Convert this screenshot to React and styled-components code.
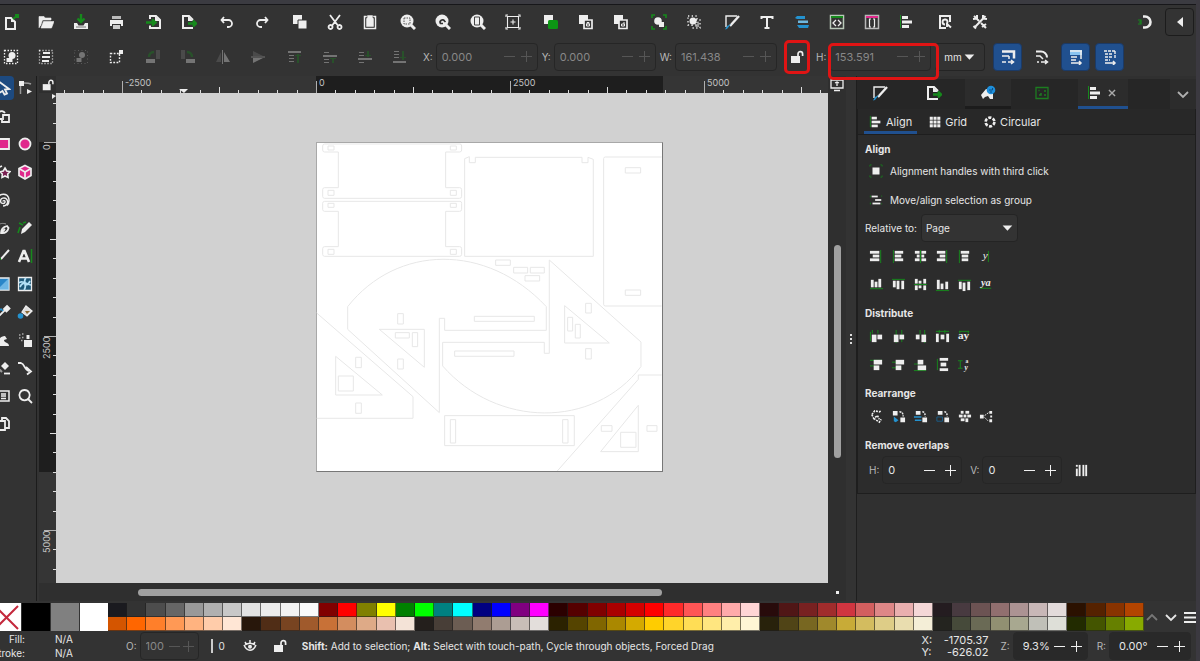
import { useState } from "react";
import styled, { createGlobalStyle } from "styled-components";

const W = "#eeeeee";
const G = "#168a1c";
const B = "#2492cf";
const P = "#e0288c";

// every entry lives in a 16x16 box; a list means plain rects: [x, y, w, h, color]
const glyphs = {
    newDoc: <><path d="M3 4h5l4 4v7H3z" fill="none" stroke={W} strokeWidth="2" /><path d="M8 4v4h4" fill={W} /><path d="M10 5l5-4M12 1h3v3" stroke={G} strokeWidth="2" fill="none" /></>,
    open: <path d="M1 14V2.500h5l1 1.500h6v2H4.500L2.500 12M3 14L5.500 7.500H16L13.500 14z" fill={W} stroke={W} strokeLinejoin="round" strokeWidth=".6" />,
    save: <><path d="M1 9h14v6H1z" fill={W} /><path d="M4 9h8l-1.500 2.500h-5z" fill="#333" /><path d="M3 13h10" stroke="#777" /><path d="M8 0v7M4.500 4.500L8 8l3.500-3.500" stroke={G} strokeWidth="2.400" fill="none" /></>,
    print: <><path d="M4 2h9v3H4z" fill="#bbb" /><path d="M2 6h13v6h-2v-2H4v2H2z" fill={W} /><path d="M5 11h7v4H5z" fill="#ccc" /></>,
    importDoc: <><path d="M4 5V2h6l4 4v8H4v-2.500" fill="none" stroke={W} strokeWidth="2" /><path d="M9 2v5h5" fill={W} /><path d="M0 8.500h8M6 5.500l3.500 3L6 11.500" stroke={G} strokeWidth="2.400" fill="none" /></>,
    exportDoc: <><path d="M11 13v1H2V2h6l4 4" fill="none" stroke={W} strokeWidth="2" /><path d="M7 2v5h5z" fill={W} /><path d="M7 9.500h8M12 6.500l3 3-3 3" stroke={G} strokeWidth="2.400" fill="none" /></>,
    undo: <path d="M5 3L2.500 6 5 9M3 6h6.500a3.500 3.500 0 0 1 0 7H8" fill="none" stroke={W} strokeWidth="1.800" />,
    redo: <path d="M11 3l2.500 3L11 9M13 6H6.500a3.500 3.500 0 0 0 0 7H8" fill="none" stroke={W} strokeWidth="1.800" />,
    copy: <><path d="M1 1h9v9H1z" fill={W} /><path d="M6 6h9v9H6z" fill={W} stroke="#333" /></>,
    cut: <path d="M3 1l7.500 10M13 1L5.500 11M3.500 11a2 2 0 1 0 .1 0zM12.500 11a2 2 0 1 0 .1 0z" fill="none" stroke={W} strokeWidth="1.800" />,
    paste: <><path d="M2.500 2.500h11v12h-11z" fill="none" stroke={W} strokeWidth="1.500" /><path d="M5 1h6v3h1v9H4V4h1z" fill={W} stroke="#333" strokeWidth=".5" /></>,
    zoomSel: <><circle cx="7" cy="7" r="6.500" fill={W} /><path d="M11 11l4 4" stroke={W} strokeWidth="3" /><path d="M4 4h6v6H4z" fill="none" stroke="#555" strokeDasharray="1.500 1" /></>,
    zoomDraw: <><circle cx="7" cy="7" r="6.500" fill={W} /><path d="M11 11l4 4" stroke={W} strokeWidth="3" /><path d="M8 9.500H5.500a2.300 2.300 0 1 1 4-2.500l1 1" fill="none" stroke="#333" strokeWidth="1.700" /></>,
    zoomPage: <><circle cx="7" cy="7" r="6.500" fill={W} /><path d="M11 11l4 4" stroke={W} strokeWidth="3" /><path d="M4.500 3h5v8h-5z" fill={W} stroke="#444" /></>,
    center: <path d="M2.500 2.500h11v11h-11zM8 5.500v5M5.500 8h5M1 3V1h2M13 1h2v2M15 13v2h-2M3 15H1v-2" fill="none" stroke={W} strokeWidth="1.100" />,
    duplicate: <><path d="M1 1h9v9H1z" fill={W} /><rect x="5" y="6" width="10" height="9" rx="1.500" fill="#0c9614" /></>,
    clone: <><path d="M1 1h9v9H1z" fill={W} /><path d="M6 6h8v8.500H6z" fill="#333" stroke={W} strokeWidth="1.700" /><path d="M8.500 10h3v2h-3zM9 10V8.500h2V10" fill="none" stroke={W} /></>,
    unlink: <><path d="M1 1h9v9H1z" fill={W} /><path d="M6 6h8v8.500H6z" fill="#333" stroke={W} strokeWidth="1.700" /><path d="M8.500 10h3v2h-3zM11 10V8" fill="none" stroke={W} /></>,
    group: <><circle cx="7" cy="7" r="3.800" fill={W} /><path d="M8 8h5v5H8z" fill={W} /><path d="M1 4V1h3M12 1h3v3M15 12v3h-3M4 15H1v-3" fill="none" stroke={G} strokeWidth="1.600" /></>,
    ungroup: <><circle cx="7" cy="7" r="3.500" fill={W} /><path d="M9 13l4-6v6z" fill="#999" /><path d="M2 2h9v9H2zM6 6h8v8H6z" fill="none" stroke={W} strokeWidth="1.300" strokeDasharray="1.300 2.400" /></>,
    fill: <><path d="M13 2H2v11" fill="none" stroke={W} strokeWidth="1.400" /><path d="M15 2L6 12" stroke={W} strokeWidth="2.400" /><path d="M7 10l-4 5-2 .5L3 12z" fill={B} /></>,
    text: <path d="M2.500 5V3h11v2M8 3v11M5.500 14h5" fill="none" stroke={W} strokeWidth="2" />,
    layers: <><path d="M1 4l2-2h8v3H3z" fill={B} /><path d="M4 6.500h10v2.500H4z" fill="#6fb8df" /><path d="M3 11h12l-1 3H5z" fill={B} /></>,
    xml: <><path d="M1.500 1.500h13v13h-13z" fill="none" stroke="#b8c8b8" strokeWidth="1.500" /><path d="M2 3h12" stroke={G} strokeWidth="2" /><path d="M7 6L4 9l3 3M9 6l3 3-3 3" fill="none" stroke={W} strokeWidth="1.300" /></>,
    selectors: <><path d="M1.500 1.500h13v13h-13z" fill="none" stroke="#b8b8b8" strokeWidth="1.500" /><path d="M2 3h12" stroke={P} strokeWidth="2" /><path d="M7 5H5.500v8H7M9 5h1.500v8H9" fill="none" stroke={W} strokeWidth="1.200" /></>,
    align: [[1, 1, 1, 13, G], [3, 2, 6, 3], [3, 6.5, 10, 3], [3, 11, 7, 3]],
    docProps: <><path d="M9 14H3V2h10v6" fill="none" stroke={W} strokeWidth="2" /><path d="M8 10.500a2.500 2.500 0 1 1 2.500-3L10 10l4 3.500M10 9v4" fill="none" stroke={W} strokeWidth="1.900" /></>,
    prefs: <path d="M2 2l5 5M1 5l4-.5L5 1M9 9l5 5M10 13l4-3M13.500 2L3 13M15 5l-4-.5L11 1M1.500 12L4 14.500" fill="none" stroke={W} strokeWidth="2" />,
    snap: <><path d="M6 2.500h2a5.500 5.500 0 0 1 0 11H6" fill="none" stroke={W} strokeWidth="2.600" /><path d="M1 6h3v4H1M2 8h2" fill="none" stroke={G} strokeWidth="1.200" /></>,
    back: <path d="M11 3v10L5 8z" fill={W} />,

    selAll: <><path d="M1.500 1.500h13v13h-13z" fill="none" stroke={W} strokeWidth="1.300" strokeDasharray="1.500 1.500" /><circle cx="9" cy="6.500" r="3.500" fill={W} /><path d="M3.500 9h6v4h-6z" fill={W} /></>,
    selLayers: <><path d="M1.500 1.500h13v13h-13z" fill="none" stroke={W} strokeWidth="1.300" strokeDasharray="1 2" /><path d="M5 4h7M4 8h8M4 12h7" stroke={W} strokeWidth="2" /></>,
    deselect: <><path d="M1.500 1.500h13v13h-13z" fill="none" stroke={W} strokeDasharray="1 2.500" opacity=".6" /><circle cx="9" cy="6" r="3" fill={W} /><path d="M3.500 9h5v4h-5z" fill={W} /></>,
    touch: <><path d="M2.500 4.500h9v9h-9z" fill="none" stroke={W} strokeWidth="1.400" strokeDasharray="1.800 1.400" /><path d="M11 1h4v4h-4z" fill={W} /></>,
    rotL: <><path d="M1 10h9v4H1z" fill={W} /><path d="M11 1h4v9h-4z" fill="#777" /><path d="M4 8c0-3 2-5 5-5" stroke={G} strokeWidth="2.500" fill="none" /></>,
    rotR: <><path d="M6 10h9v4H6z" fill={W} /><path d="M1 1h4v9H1z" fill="#777" /><path d="M7 3c3 0 5 2 5 5" stroke={G} strokeWidth="2.500" fill="none" /></>,
    flipH: <><path d="M6 3v10H1z" fill="#777" /><path d="M9 3l6 10H9z" fill={W} /><path d="M7.500 1v14" stroke={W} /></>,
    flipV: <><path d="M3 2l10 5H3z" fill="#777" /><path d="M3 9h10L3 14z" fill={W} /><path d="M1 8h14" stroke={W} /></>,
    raiseTop: [[1, 2, 13, 2], [2, 6, 5, 1], [2, 9, 5, 1], [2, 12, 5, 1], [10, 5, 2, 9, G], [8, 6, 6, 1, G]],
    raise: [[2, 3, 5, 1], [1, 6, 14, 2], [2, 10, 5, 1], [2, 13, 5, 1], [10, 9, 2, 5, G], [8, 9, 6, 1, G]],
    lower: [[2, 3, 5, 1], [2, 6, 5, 1], [1, 9, 14, 2], [2, 13, 5, 1], [10, 2, 2, 6, G], [8, 6, 6, 1, G]],
    lowerBottom: [[2, 2, 5, 1], [2, 5, 5, 1], [2, 8, 5, 1], [1, 12, 13, 2], [10, 2, 2, 9, G], [8, 8, 6, 1, G]],
    unlock: <><path d="M2 7h9v7H2z" fill={W} /><path d="M9 7V5a2.300 2.300 0 0 1 4.600 0v2" fill="none" stroke={W} strokeWidth="1.700" /></>,
    scaleStroke: <><path d="M2 2.500h12v7" fill="none" stroke={W} strokeWidth="2.500" /><path d="M2 7h7M9 7v3M2 13h4M8 13h5M11 11l2.500 2-2.500 2" fill="none" stroke={W} strokeWidth="1.500" /></>,
    scaleCorner: <><path d="M2 2.500h5a6 6 0 0 1 6 6" fill="none" stroke={W} strokeWidth="2" /><path d="M2 7h4l3 3M3 13h2M7 13h6M11 11l2.500 2-2.500 2" fill="none" stroke={W} strokeWidth="1.500" /></>,
    scaleGrad: <><path d="M2 1h12v5H2z" fill="#8ac4f0" /><path d="M2 2h12M13 2v8M3 8h6M3 11h5M3 14h10M11 12l2 2-2 2" fill="none" stroke={W} strokeWidth="1.500" /></>,
    scalePattern: <><path d="M2 2h12M13 2v8M3 5h7M3 8h7M3 11h5" fill="none" stroke={W} strokeWidth="1.400" strokeDasharray="3 1" /><path d="M3 14h10M11 12l2 2-2 2" fill="none" stroke={W} strokeWidth="1.500" /></>,

    pointer: <path d="M3 1l11 8-4 .5 2 4-2.500 1L7.500 11 4 13z" fill="none" stroke={W} strokeWidth="1.800" />,
    node: <><path d="M2 1h5v5H2z" fill={W} /><path d="M3.500 6v8M7 3c3 0 5 0 7 1" stroke="#999" fill="none" strokeWidth="1.500" /><path d="M10 9l5 2.500-5 2.500z" fill={W} /></>,
    builder: <path d="M8 12V7h6v7H7v-2M3 10a4 4 0 1 1 7-5M2 11h5" fill="none" stroke={W} strokeWidth="1.800" />,
    rect: <path d="M2 3h12v10H2z" fill={P} stroke={W} strokeWidth="1.800" />,
    ellipse: <circle cx="8" cy="8" r="5.500" fill={P} stroke={W} strokeWidth="1.800" />,
    star: <path d="M10 4l1.700 3 3.300.7-2.300 2.300.4 3.500-3.100-1.500L7 13.500 7.300 10 5 7.700 8.300 7zM2 4l5-2" fill="#7a2052" stroke={W} strokeWidth="1.600" />,
    box: <><path d="M8 1.500l6 3v7l-6 3.500-6-3.500v-7z" fill={P} stroke={W} strokeWidth="1.700" /><path d="M2 4.500l6 3.500 6-3.500M8 8v7" fill="none" stroke={W} strokeWidth="1.700" /></>,
    spiral: <path d="M8 9.500c0-1.500 2.500-1 2 .7-.6 2-4.500 1.600-4.500-1.200 0-3 4-4 6-2 2.500 3 .5 7-3.500 7M3 5c3-4 9-3.500 10.500.5 1 3 .5 6-1.500 8" fill="none" stroke={W} strokeWidth="1.400" />,
    pen: <><path d="M6 13c0-4 2-6 6-7l1.500 2c-1 4-3 5.500-7.500 5zM6 13l4-4" fill="none" stroke={W} strokeWidth="1.800" /><path d="M2 6c3-3 6-3 9-2" stroke="#999" fill="none" /></>,
    pencil: <><path d="M12 2l3 3-7 7-4 2 1-5z" fill={W} /><path d="M1 13l2-6M2 3l4 2M6 3l3-1" stroke={G} strokeWidth="1.600" fill="none" /></>,
    brush: <><path d="M14 2l-8 9" stroke={W} strokeWidth="2" /><path d="M3 8l3 3-4 3" fill={G} stroke={G} /></>,
    textTool: <><path d="M2 14L6.500 3h1L12 14M4 10.500h6" fill="none" stroke={W} strokeWidth="2.600" /><path d="M14.500 1v14" stroke={G} strokeWidth="1.500" /></>,
    gradient: <><path d="M2 2h12v12H2z" fill="#2a86c8" stroke={W} strokeWidth="1.300" /><path d="M2 14L14 2v12z" fill="#8ccbf0" opacity=".7" /></>,
    mesh: <><path d="M1.500 1.500h13v13h-13z" fill="#1e5878" stroke={W} strokeWidth="1.300" /><path d="M9 2c-4 3 2 8-2 12M2 7c3-4 8 2 12 2M8 8c-2-2-4 1-5 3M8 8c2 2 4-1 5-3" fill="none" stroke="#b4e0f6" strokeWidth="1.700" /></>,
    dropper: <><path d="M12 2l2.500 2.500-3 3L9 5zM9.500 6.500L4 12l-1 2" stroke={W} strokeWidth="1.800" fill={W} /><path d="M2 9l4-4 2 2" stroke={B} strokeWidth="1.500" fill="none" /></>,
    bucket: <><path d="M9 2l6 5-5 5-5-4z" fill="#ddd" stroke={W} strokeWidth="1.300" /><path d="M8 7h5l-3 3z" fill="#8a6a35" /><circle cx="3.500" cy="12" r="2.800" fill={B} /></>,
    tweak: <path d="M1 14c3 0 1-10 9-10l2 3-3 1c0 3 5 2 5 6z" fill={W} />,
    spray: <><path d="M7 8h8v7H7zM9.500 3h3v4h-3z" fill={W} /><path d="M2 3h1.500M5 2h1.500M2 6h1.500M5 5.500h1.500M4 8.500h1.500" stroke="#aaa" strokeWidth="1.500" /></>,
    eraser: <><path d="M10 2l4 4-4 4-4-4z" fill={W} /><path d="M9 13.500h6" stroke={W} strokeWidth="1.800" /><path d="M3 8l4 4" stroke="#999" strokeWidth="2" /></>,
    connector: <path d="M1 3h3c4 1 3 7 8 8M9 7l5 4.500-4 3" fill="none" stroke={W} strokeWidth="1.800" />,
    lpe: <path d="M3 3h11v10H3M6 6h5M6 8h5M6 10.500h5" fill="none" stroke={W} strokeWidth="1.500" />,
    zoom: <path d="M7.500 2a5.200 5.200 0 1 0 .1 0zM11.500 11.500L15 15" fill="none" stroke={W} strokeWidth="1.800" />,
    pages: <path d="M5 5h5v9H3M7 5V2h4l3 3v7h-4" fill="none" stroke={W} strokeWidth="1.800" />,

    monitor: <path d="M2 3h12v8H2zM5 13.500h6M6 6l2-1 2 1M8 5v4" fill="none" stroke={W} strokeWidth="1.300" />,
    objects: <><path d="M1 10l5-6 4 1 3 4v5h-3l-2-3-3 1-2 2z" fill={W} /><circle cx="11" cy="5" r="4.300" fill="#1d8fdc" /><path d="M9 5h3.500V3M10 7h2" stroke="#0d4f86" fill="none" /></>,
    trace: <><path d="M2 2.500h12v11H2z" fill="none" stroke="#1c7c20" strokeWidth="1.300" /><path d="M5 10h2V8M10 6h2M4.500 5.500h1M10 10h2" stroke="#1c7c20" strokeWidth="1.500" fill="none" /></>,
    close: <path d="M4.500 4.500l7 7M11.500 4.500l-7 7" stroke="#aaa" strokeWidth="1.600" />,
    chevDown: <path d="M3 6l5 5 5-5" fill="none" stroke="currentColor" strokeWidth="1.800" />,
    chevUp: <path d="M3 11l5-5 5 5" fill="none" stroke="currentColor" strokeWidth="1.800" />,
    caret: <path d="M3 5h11l-5.500 6z" fill={W} />,
    grid: [[2, 2, 3.5, 3.5], [6.3, 2, 3.5, 3.5], [10.6, 2, 3.5, 3.5], [2, 6.3, 3.5, 3.5], [6.3, 6.3, 3.5, 3.5], [10.6, 6.3, 3.5, 3.5], [2, 10.6, 3.5, 3.5], [6.3, 10.6, 3.5, 3.5], [10.6, 10.6, 3.5, 3.5]],
    circular: <circle cx="8" cy="8" r="5" fill="none" stroke={W} strokeWidth="3" strokeDasharray="3.600 1.640" />,
    handles: <><path d="M4 4h8v8H4z" fill={W} /><path d="M1 3V1h2M13 1h2v2M15 13v2h-2M3 15H1v-2" fill="none" stroke={G} strokeWidth=".8" /></>,
    asGroup: [[3, 3, 7, 2], [7, 7, 7, 2], [4, 11, 9, 2], [1, 3, 1, 2, G], [1, 11, 1, 2, G], [14, 3, 1, 1, G], [14, 12, 1, 1, G]],

    aLeftOut: [[1, 2, 10, 3], [4, 6, 7, 3], [1, 10, 10, 3], [12, 1, 1, 14, G]],
    aLeft: [[2, 1, 1, 14, G], [4, 2, 9, 3], [4, 6, 7, 3], [4, 10, 9, 3]],
    aCenter: [[2, 2, 5, 3], [4, 6, 3, 3], [2, 10, 5, 3], [9, 2, 5, 3], [9, 6, 3, 3], [9, 10, 5, 3], [7.5, 1, 1, 14, G]],
    aRight: [[2, 2, 9, 3], [5, 6, 6, 3], [2, 10, 9, 3], [12, 1, 1, 14, G]],
    aRightOut: [[2, 1, 1, 14, G], [4, 2, 9, 3], [5, 6, 7, 3], [5, 10, 7, 3]],
    aTextH: <><path d="M10 2v12" stroke={G} /><text x="4" y="11" fontFamily="Liberation Serif" fontStyle="italic" fontSize="12" fill={W}>y</text></>,
    vTopOut: [[2, 3, 3, 8], [6, 5, 3, 6], [10, 2, 3, 9], [1, 12, 14, 1, G]],
    vTop: [[1, 2, 14, 1, G], [2, 4, 3, 7], [6, 4, 3, 9], [11, 4, 3, 9]],
    vCenter: [[2, 2, 3, 5], [6, 4, 3, 3], [11, 2, 3, 5], [2, 9, 3, 5], [6, 9, 3, 3], [11, 9, 3, 5], [1, 7.5, 14, 1, G]],
    vBottom: [[2, 3, 3, 10], [6, 7, 3, 6], [11, 5, 3, 8], [1, 14, 14, 1, G]],
    vBottomOut: [[1, 3, 14, 1, G], [2, 5, 3, 8], [6, 6, 3, 9], [11, 5, 3, 9]],
    aTextV: <><path d="M1 12h12" stroke={G} /><text x="2" y="10" fontFamily="Liberation Serif" fontStyle="italic" fontWeight="700" fontSize="11" fill={W}>ya</text></>,
    dLeft: [[1, 3, 1, 10, G], [3, 1, 1, 4, G], [9, 1, 1, 4, G], [3, 6, 5, 8], [9, 6, 5, 5]],
    dCenter: [[5, 1, 1, 14, G], [11, 1, 1, 13, G], [3, 6, 5, 8], [9, 6, 5, 5]],
    dRight: [[7, 1, 1, 5, G], [12, 1, 1, 14, G], [3, 6, 4, 5], [9, 6, 5, 8]],
    dGapH: [[1, 2, 14, 1, G], [1, 5, 3, 9], [6, 6, 4, 5], [12, 5, 3, 9], [4, 1, 1, 4, G], [10, 1, 1, 4, G]],
    dTextH: <><path d="M2 2.500h11M3 2v3M12 2v3" stroke={G} /><text x="1" y="11" fontFamily="Liberation Serif" fontWeight="700" fontSize="12" fill={W}>ay</text></>,
    dTop: [[1, 3, 13, 1, G], [1, 9, 5, 1, G], [5, 3, 9, 5], [5, 9, 6, 5]],
    dMid: [[1, 5, 13, 1, G], [1, 11, 10, 1, G], [5, 3, 9, 5], [5, 9, 6, 5]],
    dBottom: [[1, 7, 6, 1, G], [1, 14, 13, 1, G], [5, 3, 6, 5], [5, 9, 9, 5]],
    dGapV: [[2, 2, 1, 12, G], [5, 1, 9, 3], [6, 6, 6, 4], [5, 12, 9, 3]],
    dTextV: <><path d="M1 4h5M1 12h5M3.500 4v8" stroke={G} /><text x="9" y="6" fontFamily="Liberation Serif" fontWeight="700" fontSize="6" fill={W}>a</text><text x="8" y="14" fontFamily="Liberation Serif" fontWeight="700" fontStyle="italic" fontSize="8" fill={W}>y</text></>,
    graph: <path d="M3 6l3-4 5 1 2-1M3 6l2 4 4-3M5 10l6 4 2-3M9 7l2 4" fill="none" stroke={W} strokeWidth="1.700" strokeDasharray="2.200 1" />,
    exchange: <><path d="M2 2h5v5H2zM10 9h5v5h-5z" fill={W} /><path d="M3 8l5 4-3 2-2-1z" fill={B} /><path d="M9 3c3 0 4 2 4 5" stroke={W} fill="none" strokeWidth="1.500" strokeDasharray="2 1" /></>,
    exchangeZ: <><path d="M3 2h5v4H3zM10 9h5v5h-5z" fill={W} /><path d="M1 8.500h8M2 12h7" stroke={B} strokeWidth="1.800" /><path d="M10 3c2 0 3 2 3 5" stroke={W} fill="none" strokeWidth="1.500" strokeDasharray="2 1" /></>,
    exchangeC: <><path d="M3 2h5v4H3zM10 9h5v5h-5z" fill={W} /><path d="M2 8.500h6v4.500H2z" fill="none" stroke="#1b5e8a" /><path d="M10 3c2 0 3 2 3 5" stroke={W} fill="none" strokeWidth="1.500" strokeDasharray="2 1" /></>,
    randomize: [[4, 2, 3, 3], [9, 2, 4, 3], [2, 6, 4, 3], [7, 6, 3, 3], [11, 6, 4, 3], [4, 10, 4, 3], [9, 10, 3, 4]],
    unclump: <><path d="M1 6h4v4H1zM11 2h3v3h-3zM12 7h2v2h-2zM11 11h3v3h-3z" fill={W} /><path d="M6 7l4-3M6 9l4 4" stroke={W} strokeDasharray="2 1" /></>,
    overlaps: [[2, 2, 2, 2], [2, 6, 2, 8], [5, 2, 2, 12], [9, 2, 2, 12], [12, 2, 2, 12]],
    eye: <><path d="M2 7c3 7 9 7 12 0M3 4l1.500 2.500M8 2v3M13 4l-1.500 2.500M3 7c3-2 7-2 10 0" fill="none" stroke={W} strokeWidth="1.500" /><circle cx="8" cy="8.800" r="2" fill={W} /></>,
    menu: [[2, 3, 12, 2], [2, 7.5, 12, 2], [2, 12, 12, 2]],
};

function Icon({ name, size = 16 }) {
    const g = glyphs[name];
    return (
        <svg width={size} height={size} viewBox="0 0 16 16" aria-hidden="true">
            {Array.isArray(g)
                ? g.map(([x, y, w, h, c], i) => <rect key={i} x={x} y={y} width={w} height={h} fill={c || W} />)
                : g}
        </svg>
    );
}

const commands = [
    ["newDoc", "open", "save", "print"],
    ["importDoc", "exportDoc"],
    ["undo", "redo"],
    ["copy", "cut", "paste"],
    ["zoomSel", "zoomDraw", "zoomPage", "center"],
    ["duplicate", "clone", "unlink"],
    ["group", "ungroup"],
    ["fill", "text", "layers", "xml", "selectors", "align"],
    ["docProps", "prefs"],
];

const selectTools = [
    ["selAll", "selLayers", "deselect", "touch"],
    ["rotL", "rotR", "flipH", "flipV"],
    ["raiseTop", "raise", "lower", "lowerBottom"],
];
const dimTools = ["deselect", "rotL", "rotR", "flipH", "flipV", "raiseTop", "raise", "lower", "lowerBottom"];

const tools = [
    ["pointer", "node"], ["builder"], ["rect", "ellipse"], ["star", "box"], ["spiral"], ["pen", "pencil"],
    ["brush", "textTool"], ["gradient", "mesh"], ["dropper", "bucket"], ["tweak", "spray"],
    ["eraser", "connector"], ["lpe", "zoom"], ["pages"],
];

const swatches = [
    "1a1a1f 333333 4d4d4d 666666 999999 b0b0b0 c8c8c8 e2e2e2 ececec f2f2f2 f9f9f9 800000 ff0000 808000 ffff00 008000 00ff00 008080 00ffff 000080 0000ff 800080 ff00ff 2b0000 550000 800000 aa0000 d40000 ff0000 ff2a2a ff5555 ff8080 ffaaaa ffd5d5 280b0b 501616 782121 a02c2c d03540 d35f5f de8787 e9afaf f4d7d7 241c20 483a40 6c5353 916f6f ac9393 c8b7b7 e3dbdb 2b1100 552200 883300 b34400",
    "d45500 ff6600 ff7f2a ff9955 ffb380 ffccaa ffe6d5 28170b 502d16 784421 a05a2c c87137 d38d5f deaa87 e9c0af f4e3d7 241f1c 483e37 6c5d53 917c6f ac9d93 c8beb7 e3dedb 2b2200 554400 806600 aa8800 d4aa00 ffcc00 ffd42a ffdd55 ffe680 ffeeaa fff6d5 28220b 504416 786721 a0892c c8ab37 d3bc5f decd87 e9ddaf f4eed7 24241f 464a3a 6a6a55 919072 a8a890 c0c0b8 dedfd8 222b00 445500 668000 88aa00",
].map((row) => row.split(" "));

const alignRows = [
    ["aLeftOut", "aLeft", "aCenter", "aRight", "aRightOut", "aTextH"],
    ["vTopOut", "vTop", "vCenter", "vBottom", "vBottomOut", "aTextV"],
];
const distributeRows = [
    ["dLeft", "dCenter", "dRight", "dGapH", "dTextH"],
    ["dTop", "dMid", "dBottom", "dGapV", "dTextV"],
];
const rearrange = ["graph", "exchange", "exchangeZ", "exchangeC", "randomize", "unclump"];

function Spin({ id, label, value, width, dim, flat, step = 17 }) {
    const [v, setV] = useState(value);
    return (
        <Field>
            <label htmlFor={id}>{label}</label>
            <SpinBox $width={width} $dim={dim} $flat={flat} $step={step}>
                <input id={id} value={v} onChange={(e) => setV(e.target.value)} />
                <button aria-label="Decrease"><Sign $dim={dim} /></button>
                <button aria-label="Increase"><Sign $dim={dim} $plus /></button>
            </SpinBox>
        </Field>
    );
}

const ticks = Array.from({ length: 61 }, (_, i) => i - 20);

function Ruler({ vertical, origin, length, labels }) {
    // 250 units between two ticks
    const step = 19.4;
    return (
        <RulerSvg>
            <g transform={vertical ? "matrix(0 1 1 0 0 0)" : undefined}>
                <rect x={origin} y="0" width={length} height="18" fill="#1e1e1e" />
                {ticks.map((t) => {
                    const size = t % 10 === 0 ? 12 : t % 5 === 0 ? 6 : 3;
                    return <rect key={t} x={Math.round(origin + t * step)} y={17 - size} width="1" height={size} fill={size === 12 ? "#b0b0b0" : "#dddddd"} />;
                })}
                {vertical ? <path d="M1 13h5l-3 4z" fill={W} /> : <path d="M123 13h9l-4 4z" fill={W} />}
            </g>
            {labels.map((n) => {
                const at = Math.round(origin + (n / 250) * step);
                return vertical
                    ? <text key={n} transform={`translate(11 ${at + (n ? 23 : 8)}) rotate(-90)`}>{n}</text>
                    : <text key={n} x={at + 3} y="10">{n}</text>;
            })}
        </RulerSvg>
    );
}

function Drawing() {
    return (
        <svg width="347" height="330" viewBox="0 0 347 330" role="img" aria-label="Drawing">
            <g transform="translate(-6 -6) scale(.3333)" fill="none" stroke="#e7e7e7" strokeWidth="3">
                {[[24, 48, 155, 187], [196, 226, 332, 361]].map(([a, b, c, d]) => (
                    <g key={a}>
                        <path d={`M44 ${a}H450Q455 ${a} 455 ${a + 6}V${b - 6}Q455 ${b} 449 ${b}H407V${c}H449Q455 ${c} 455 ${c + 6}V${d - 6}Q455 ${d} 449 ${d}H44Q38 ${d} 38 ${d - 6}V${c + 6}Q38 ${c} 44 ${c}H85V${b}H44Q38 ${b} 38 ${b - 6}V${a + 6}Q38 ${a} 44 ${a}z`} />
                        <path d={`M54 ${a + 6}h18v12h-18zM421 ${a + 6}h18v12h-18zM54 ${c + 8}h18v15h-18zM421 ${c + 8}h18v15h-18z`} />
                    </g>
                ))}
                <path d="M464 361V68L478 62V80H496V64H816V80H834V64L850 70V361z" />
                <path d="M1055 63H886Q881 63 881 68V505Q881 510 886 510H1055M946 95h46v16h-46zM946 462h46v16h-46z" />
                <path d="M113 512C260 325 530 320 709 512V583M113 512V580L388 830V547H404V583H709" />
                <path d="M493 541h180v15h-180zM434 645h178v16h-178zM557 372h44v16h-44zM611 394h42v17h-42zM661 394h42v17h-42zM645 419h44v16h-44z" />
                <path d="M703 652H718V372L993 618V692C850 880 560 875 398 690V619H703V652" />
                <path d="M764 509V621H898zM827 502h17v29h-17zM827 638h17v31h-17zM773 544h15v41h-15zM796 565h15v41h-15z" />
                <path d="M208 580H343V694zM263 533h17v31h-17zM263 669h17v30h-17zM256 590h42v16h-42zM307 590h16v42h-16z" />
                <path d="M20 531L309 782V847H20M77 661V777H217zM85 720h45v45h-45zM137 664h17v31h-17zM137 801h17v31h-17z" />
                <path d="M404 839H793V929H404zM421 851h16v70h-16zM758 851h16v70h-16z" />
                <path d="M742 1005L985 730V717H1055M985 808V947H872zM932 889h46v45h-46zM874 869h32v17h-32zM1011 869h30v17h-30z" />
            </g>
        </svg>
    );
}

function Actions({ names }) {
    return (
        <Row>
            {names.map((n) => <ActionButton key={n} aria-label={n}><Icon name={n} size={15} /></ActionButton>)}
        </Row>
    );
}

export default function App() {
    const [unit, setUnit] = useState("mm");
    const [relative, setRelative] = useState("Page");

    return (
        <Window>
            <GlobalStyle />
            <TitleStrip />
            <CommandBar>
                {commands.map((group, i) => (
                    <ButtonGroup key={i} $gap={3}>
                        {group.map((name) => <ToolButton key={name} aria-label={name}><Icon name={name} /></ToolButton>)}
                    </ButtonGroup>
                ))}
                <Spacer />
                <ToolButton aria-label="snap"><Icon name="snap" /></ToolButton>
                <BackButton aria-label="Snap options"><Icon name="back" /></BackButton>
            </CommandBar>

            <ControlBar>
                {selectTools.map((group, i) => (
                    <ButtonGroup key={i} $gap={2}>
                        {group.map((name) => (
                            <ToolButton key={name} aria-label={name} $dim={dimTools.includes(name)}><Icon name={name} /></ToolButton>
                        ))}
                    </ButtonGroup>
                ))}
                <Fields>
                    <Spin id="x" label="X:" value="0.000" width={102} dim />
                    <Spin id="y" label="Y:" value="0.000" width={102} dim />
                    <Spin id="w" label="W:" value="161.438" width={102} dim />
                    <LockButton aria-label="Lock ratio"><Icon name="unlock" /></LockButton>
                    <Marked><Spin id="h" label="H:" value="153.591" width={102} dim /></Marked>
                </Fields>
                <SelectBox $width={50} $joined>
                    <select aria-label="Unit" value={unit} onChange={(e) => setUnit(e.target.value)}>
                        <option>mm</option>
                        <option>px</option>
                    </select>
                    <Icon name="caret" size={14} />
                </SelectBox>
                <Toggles>
                    <Toggle $on aria-label="Scale stroke"><Icon name="scaleStroke" /></Toggle>
                    <Toggle aria-label="Scale corners"><Icon name="scaleCorner" /></Toggle>
                    <Toggle $on aria-label="Move gradients"><Icon name="scaleGrad" /></Toggle>
                    <Toggle $on aria-label="Move patterns"><Icon name="scalePattern" /></Toggle>
                </Toggles>
            </ControlBar>

            <Main>
                <Toolbox>
                    {tools.map((row, i) => (
                        <ToolRow key={i}>
                            {row.map((name) => (
                                <ToolboxButton key={name} $on={name === "pointer"} aria-label={name}><Icon name={name} /></ToolboxButton>
                            ))}
                        </ToolRow>
                    ))}
                </Toolbox>
                <Desk>
                    <Corner aria-label="Lock guides"><Icon name="unlock" size={14} /></Corner>
                    <Ruler origin={260} length={347} labels={[-2500, 0, 2500, 5000]} />
                    <Corner aria-label="Display mode"><Icon name="monitor" /></Corner>
                    <Ruler vertical origin={49} length={330} labels={[0, 2500, 5000]} />
                    <Canvas><Sheet><Drawing /></Sheet></Canvas>
                    <ScrollTrack $vertical><i /><b /><i /></ScrollTrack>
                    <span />
                    <ScrollTrack><i /><b /><i /></ScrollTrack>
                    <Dot />
                </Desk>
                <Splitter><span /><span /><span /></Splitter>
                <Dock>
                    <DockTabs>
                        <DockTab aria-label="Fill and stroke"><Icon name="fill" /></DockTab>
                        <DockTab aria-label="Export"><Icon name="exportDoc" /></DockTab>
                        <DockTab aria-label="Objects" $seen><Icon name="objects" /></DockTab>
                        <DockTab aria-label="Trace"><Icon name="trace" /></DockTab>
                        <DockTab aria-label="Align and distribute" $on><Icon name="align" /><Icon name="close" size={14} /></DockTab>
                        <Spacer />
                        <DockMenu aria-label="Dialogs"><Icon name="chevDown" /></DockMenu>
                    </DockTabs>
                    <Panel>
                        <SubTabs>
                            <SubTab $on><Icon name="align" size={14} />Align</SubTab>
                            <SubTab><Icon name="grid" size={14} />Grid</SubTab>
                            <SubTab><Icon name="circular" size={14} />Circular</SubTab>
                        </SubTabs>
                        <PanelBody>
                            <Heading>Align</Heading>
                            <CheckRow><input type="checkbox" /><Icon name="handles" size={14} />Alignment handles with third click</CheckRow>
                            <CheckRow><input type="checkbox" /><Icon name="asGroup" size={14} />Move/align selection as group</CheckRow>
                            <Row>
                                <label htmlFor="relative">Relative to:</label>
                                <SelectBox $width={97}>
                                    <select id="relative" value={relative} onChange={(e) => setRelative(e.target.value)}>
                                        <option>Page</option>
                                        <option>Drawing</option>
                                    </select>
                                    <Icon name="caret" size={14} />
                                </SelectBox>
                            </Row>
                            {alignRows.map((row, i) => <Actions key={i} names={row} />)}
                            <Heading>Distribute</Heading>
                            {distributeRows.map((row, i) => <Actions key={i} names={row} />)}
                            <Heading>Rearrange</Heading>
                            <Actions names={rearrange} />
                            <Heading>Remove overlaps</Heading>
                            <OverlapRow>
                                <Spin id="oh" label="H:" value="0" width={80} step={21} />
                                <Spin id="ov" label="V:" value="0" width={80} step={21} />
                                <ActionButton aria-label="Remove overlaps"><Icon name="overlaps" size={15} /></ActionButton>
                            </OverlapRow>
                        </PanelBody>
                    </Panel>
                </Dock>
            </Main>

            <Palette>
                <NoColor aria-label="None"><svg width="22" height="28" viewBox="0 0 22 28"><path d="M-5 3L18 26M18 3L-5 26" stroke="#c4283c" strokeWidth="2" /></svg></NoColor>
                <BigSwatch $color="#000000" aria-label="Black" />
                <BigSwatch $color="#808080" aria-label="Gray" />
                <BigSwatch $color="#ffffff" aria-label="White" />
                <SwatchGrid>
                    {swatches.flat().map((c, i) => <Swatch key={i} aria-label={"#" + c} style={{ background: "#" + c }} />)}
                </SwatchGrid>
                <PaletteNav>
                    <button aria-label="Previous" disabled><Icon name="chevUp" /></button>
                    <button aria-label="Next"><Icon name="chevDown" /></button>
                    <button aria-label="Palette menu"><Icon name="menu" /></button>
                </PaletteNav>
            </Palette>

            <StatusBar>
                <Style>
                    <span>Fill:</span><span>N/A</span>
                    <span>Stroke:</span><span>N/A</span>
                </Style>
                <Spin id="opacity" label="O:" value="100" width={59} step={14} dim />
                <StrokeWidth>0</StrokeWidth>
                <StatusButton aria-label="Visibility"><Icon name="eye" /></StatusButton>
                <StatusButton aria-label="Lock layer"><Icon name="unlock" /></StatusButton>
                <Hint><b>Shift:</b> Add to selection; <b>Alt:</b> Select with touch-path, Cycle through objects, Forced Drag</Hint>
                <Coords>
                    <span>X:</span><span>-1705.37</span>
                    <span>Y:</span><span>-626.02</span>
                </Coords>
                <ViewFields>
                    <Spin id="zoom" label="Z:" value="9.3%" width={75} flat />
                    <Spin id="rotation" label="R:" value="0.00°" width={82} flat />
                </ViewFields>
            </StatusBar>
        </Window>
    );
}

const GlobalStyle = createGlobalStyle`
    * { box-sizing: border-box; }
    body {
        margin: 0;
        background: #333333;
        color: #e6e6e6;
        font-family: Inter, "Liberation Sans", sans-serif;
        font-size: 10px;
        line-height: 14px;
    }
    button, input, select {
        font: inherit;
        color: inherit;
        background: none;
        border: 0;
        padding: 0;
        margin: 0;
    }
    svg { display: block; flex: none; }
`

const Window = styled.div`
    display: flex;
    flex-direction: column;
    height: 100vh;
    overflow: hidden;
    border-right: 4px solid #3b3940;
`

const TitleStrip = styled.div`
    height: 5px;
    flex: none;
    background: #3b3b41;
    border-bottom: 1px solid #17171a;
`

const CommandBar = styled.div`
    display: flex;
    align-items: center;
    height: 34px;
    flex: none;
    margin-left: -7px;
`

const ControlBar = styled(CommandBar)`
    height: 37px;
    padding-bottom: 2px;
`

const ButtonGroup = styled.div`
    display: flex;
    margin-right: ${(p) => p.$gap}px;
`

const ToolButton = styled.button`
    display: flex;
    align-items: center;
    justify-content: center;
    width: 35px;
    height: 28px;
    opacity: ${(p) => (p.$dim ? 0.35 : 1)};
`

const Spacer = styled.div`
    flex: 1;
`

const BackButton = styled(ToolButton)`
    width: 29px;
    margin-left: 3px;
    margin-right: 2px;
    border: 1px solid #1c1c1c;
    border-radius: 4px;
`

const Fields = styled.div`
    display: flex;
    align-items: center;
    gap: 4px;
    margin-left: 4px;
`

const Field = styled.div`
    display: flex;
    align-items: center;
    gap: 3px;
    label { color: #b8b8b8; }
`

const SpinBox = styled.div`
    display: flex;
    width: ${(p) => p.$width}px;
    height: 28px;
    padding-right: ${(p) => (p.$flat || p.$dim ? 2 : 0)}px;
    border: 1px solid ${(p) => (p.$flat ? "#292929" : "#262626")};
    border-radius: 4px;
    background: ${(p) => (p.$flat ? "#292929" : "transparent")};
    color: ${(p) => (p.$dim ? "#888888" : "#e6e6e6")};
    font-size: 11px;
    input {
        flex: 1;
        min-width: 0;
        padding-left: ${(p) => (p.$flat ? 9 : 5)}px;
    }
    button {
        display: flex;
        align-items: center;
        justify-content: center;
        width: ${(p) => p.$step}px;
    }
`

const Sign = styled.span`
    display: block;
    width: 11px;
    height: 11px;
    background:
        linear-gradient(currentColor, currentColor) center / 11px 1px no-repeat,
        linear-gradient(currentColor, currentColor) center / ${(p) => (p.$plus ? "1px 11px" : "0 0")} no-repeat;
    color: ${(p) => (p.$dim ? "#565656" : "#f0f0f0")};
`

const LockButton = styled.button`
    display: flex;
    align-items: center;
    justify-content: center;
    width: 26px;
    height: 34px;
    margin: 0 2px 0 3px;
    border: 3px solid #e01414;
    border-radius: 5px;
`

const Marked = styled.div`
    position: relative;
    &::after {
        content: "";
        position: absolute;
        top: 0;
        right: -8px;
        width: 105px;
        height: 31px;
        border: 3px solid #e01414;
        border-radius: 5px;
        pointer-events: none;
        z-index: 1;
    }
`

const SelectBox = styled.div`
    position: relative;
    width: ${(p) => p.$width}px;
    height: 28px;
    margin-left: 4px;
    border: 1px solid #242424;
    border-left-width: ${(p) => (p.$joined ? 0 : 1)}px;
    border-radius: 4px;
    background: #333333;
    select {
        width: 100%;
        height: 100%;
        padding-left: ${(p) => (p.$joined ? 9 : 4)}px;
        appearance: none;
    }
    svg {
        position: absolute;
        top: 6px;
        right: ${(p) => (p.$joined ? 8 : 3)}px;
        pointer-events: none;
    }
`

const Toggles = styled.div`
    display: flex;
    gap: 5px;
    margin-left: 8px;
`

const Toggle = styled.button`
    display: flex;
    align-items: center;
    justify-content: center;
    width: 29px;
    height: 28px;
    border: 1px solid ${(p) => (p.$on ? "#1b3a66" : "transparent")};
    border-radius: 4px;
    background: ${(p) => (p.$on ? "#20508f" : "transparent")};
`

const Main = styled.div`
    display: flex;
    flex: 1;
    min-height: 0;
`

const Toolbox = styled.div`
    width: 37px;
    flex: none;
    overflow: hidden;
    border-right: 1px solid #1c1c1c;
`

const ToolRow = styled.div`
    display: flex;
    height: 28px;
    align-items: center;
    margin-left: -8px;
    &:first-child {
        height: 26px;
        align-items: flex-start;
    }
`

const ToolboxButton = styled.button`
    display: flex;
    align-items: center;
    justify-content: center;
    width: 22px;
    height: 24px;
    border-radius: 4px;
    background: ${(p) => (p.$on ? "#1d4a80" : "transparent")};
`

const Desk = styled.div`
    display: grid;
    grid-template-columns: 17px minmax(0, 1fr) 18px;
    grid-template-rows: 17px minmax(0, 1fr) 18px;
    flex: 1;
    min-width: 0;
    margin-left: 2px;
    background: #2f2f2f;
`

const Corner = styled.button`
    display: flex;
    align-items: center;
    justify-content: center;
`

const RulerSvg = styled.svg`
    width: 100%;
    height: 100%;
    overflow: hidden;
    background: #353535;
    text {
        font-size: 9px;
        fill: #c4c4c4;
    }
`

const Canvas = styled.div`
    position: relative;
    overflow: hidden;
    background: #d1d1d1;
`

const Sheet = styled.div`
    position: absolute;
    left: 260px;
    top: 49px;
    background: #ffffff;
    border: 1px solid #a8a8a8;
    border-right-color: #777777;
    border-bottom-color: #777777;
    svg { margin: -1px; }
`

const ScrollTrack = styled.div`
    display: flex;
    flex-direction: ${(p) => (p.$vertical ? "column" : "row")};
    align-items: center;
    i:first-child { flex: ${(p) => (p.$vertical ? 152 : 82)}; }
    i:last-child { flex: ${(p) => (p.$vertical ? 125 : 166)}; }
    b {
        flex: ${(p) => (p.$vertical ? 213 : 524)};
        width: 7px;
        height: 7px;
        border-radius: 4px;
        background: #a0a0a0;
    }
`

const Dot = styled.span`
    width: 3px;
    height: 3px;
    place-self: center;
    background: #eeeeee;
`

const Splitter = styled.div`
    display: flex;
    flex-direction: column;
    align-items: center;
    justify-content: center;
    gap: 2px;
    width: 11px;
    background: #333333;
    border-right: 1px solid #1e1e1e;
    span {
        width: 2px;
        height: 2px;
        background: #dddddd;
    }
`

const Dock = styled.div`
    width: 339px;
    flex: none;
    padding-top: 3px;
    background: #303030;
`

const DockTabs = styled.div`
    display: flex;
    gap: 8px;
    height: 30px;
    background: #262626;
`

const DockTab = styled.button`
    display: flex;
    align-items: center;
    justify-content: center;
    gap: 2px;
    width: ${(p) => (p.$on ? 50 : 46)}px;
    margin-left: ${(p) => (p.$on ? 5 : 0)}px;
    border-bottom: 3px solid ${(p) => (p.$on ? "#20508f" : p.$seen ? "#1c1c1c" : "transparent")};
    background: ${(p) => (p.$on || p.$seen ? "#2c2c2c" : "transparent")};
`

const DockMenu = styled.button`
    display: flex;
    align-items: center;
    justify-content: center;
    width: 26px;
    color: #b0b0b0;
    background: #2c2c2c;
`

const Panel = styled.div`
    background: #2c2c2c;
    border: 1px solid #1e1e1e;
    border-top: 0;
    padding-bottom: 9px;
`

const SubTabs = styled.div`
    display: flex;
    gap: 6px;
    height: 26px;
    padding: 0 6px;
    background: #282828;
    border-bottom: 1px solid #1e1e1e;
`

const SubTab = styled.button`
    display: flex;
    align-items: center;
    gap: 3px;
    padding: 3px 5px 0;
    border-bottom: 3px solid ${(p) => (p.$on ? "#20508f" : "transparent")};
    font-size: 11px;
`

const PanelBody = styled.div`
    padding-left: 7px;
`

const Heading = styled.h3`
    margin: 0;
    padding: 8px 0 2px;
    font-size: 10px;
    line-height: 14px;
    font-weight: 700;
    &:first-child { padding: 7px 0 0; }
`

const CheckRow = styled.label`
    display: flex;
    align-items: center;
    gap: 7px;
    height: 29px;
    padding-left: 4px;
    input {
        position: absolute;
        opacity: 0;
    }
`

const Row = styled.div`
    display: flex;
    align-items: center;
    height: 28px;
`

const ActionButton = styled.button`
    display: flex;
    align-items: center;
    justify-content: center;
    width: 22px;
    height: 22px;
`

const OverlapRow = styled(Row)`
    gap: 8px;
    padding-left: 4px;
    margin-top: 2px;
`

const Palette = styled.div`
    display: flex;
    height: 28px;
    flex: none;
    margin-top: 2px;
`

const NoColor = styled.button`
    width: 21px;
    overflow: hidden;
    background: #ffffff;
`

const BigSwatch = styled.button`
    width: 28px;
    margin-left: 1px;
    background: ${(p) => p.$color};
`

const SwatchGrid = styled.div`
    display: grid;
    grid-template-columns: repeat(54, minmax(0, 1fr));
    flex: 1;
    min-width: 0;
`

const Swatch = styled.button`
    border-right: 1px solid rgba(30, 30, 30, 0.6);
    border-bottom: 1px solid rgba(30, 30, 30, 0.6);
`

const PaletteNav = styled.div`
    display: flex;
    align-items: center;
    gap: 3px;
    width: 52px;
    button:disabled { color: #777777; }
`

const StatusBar = styled.div`
    display: flex;
    align-items: center;
    height: 30px;
    flex: none;
    padding-right: 5px;
`

const Style = styled.div`
    display: grid;
    grid-template-columns: 36px 71px;
    column-gap: 30px;
    margin-left: -11px;
    span:nth-child(odd) { text-align: right; }
`

const StrokeWidth = styled.span`
    margin: 0 17px 0 12px;
    padding-left: 6px;
    border-left: 2px solid #cccccc;
`

const StatusButton = styled.button`
    margin-right: 14px;
`

const Hint = styled.span`
    flex: 1;
    min-width: 0;
    white-space: nowrap;
    overflow: hidden;
`

const Coords = styled.div`
    display: grid;
    grid-template-columns: 17px 50px;
    margin-right: 12px;
    font-size: 11px;
    line-height: 12px;
    span:nth-child(even) { text-align: right; }
`

const ViewFields = styled.div`
    display: flex;
    gap: 9px;
`
